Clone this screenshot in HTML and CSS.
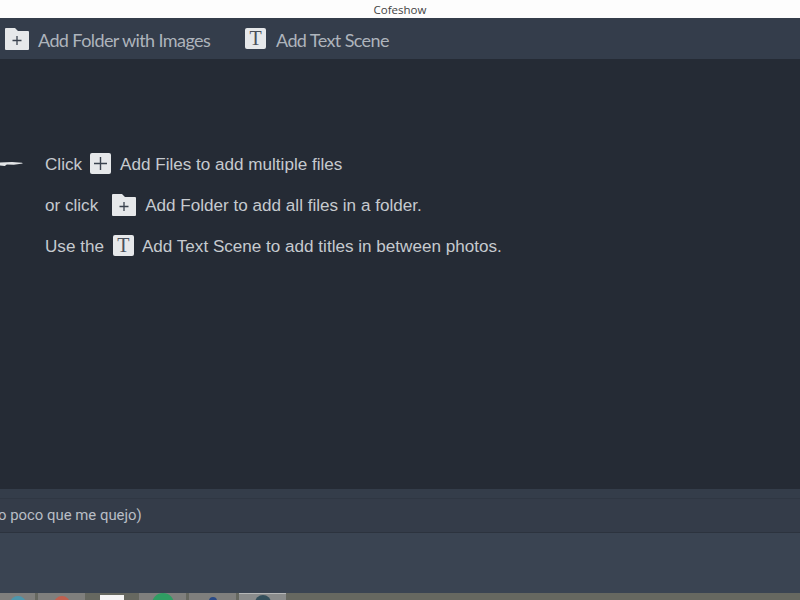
FILE: index.html
```html
<!DOCTYPE html>
<html>
<head lang="en">
    <meta charset="UTF-8">
    <title>Cofeshow</title>
    <link rel="stylesheet" href="styles.css">
</head>
<body>
<div class="title-bar">Cofeshow</div>
<div class="toolbar">
    <div class="tool tool-folder">
        <svg class="icon-folder" width="24" height="22" viewBox="0 0 24 22">
            <path d="M1 0h9l3 3h10a1 1 0 0 1 1 1v17a1 1 0 0 1-1 1H1a1 1 0 0 1-1-1V1a1 1 0 0 1 1-1z" fill="#e6e8ea"/>
            <path d="M12 8v9M7.500 12.500h9" stroke="#3a424e" stroke-width="1.300"/>
        </svg>
        <span class="label">Add Folder with Images</span>
    </div>
    <div class="tool tool-text">
        <span class="key key-t">T</span>
        <span class="label">Add Text Scene</span>
    </div>
</div>
<div class="main">
    <svg class="stroke" width="23" height="6" viewBox="0 0 23 6">
        <path d="M0 1.500L12 1l10 .8.800 .8-9 1.200-7-.2-2 1.400L0 4.600z" fill="#e4e6e8"/>
    </svg>
    <div class="row row-one">
        <span class="label">Click</span>
        <span class="key">
            <svg width="21" height="21" viewBox="0 0 21 21"><path d="M10.500 4v13M4 10.500h13" stroke="#3a424e" stroke-width="1.400"/></svg>
        </span>
        <span class="label">Add Files to add multiple files</span>
    </div>
    <div class="row row-two">
        <span class="label">or click</span>
        <svg class="icon-folder" width="24" height="22" viewBox="0 0 24 22">
            <path d="M1 0h9l3 3h10a1 1 0 0 1 1 1v17a1 1 0 0 1-1 1H1a1 1 0 0 1-1-1V1a1 1 0 0 1 1-1z" fill="#e6e8ea"/>
            <path d="M12 8v9M7.500 12.500h9" stroke="#3a424e" stroke-width="1.300"/>
        </svg>
        <span class="label">Add Folder to add all files in a folder.</span>
    </div>
    <div class="row row-three">
        <span class="label">Use the</span>
        <span class="key key-t">T</span>
        <span class="label">Add Text Scene to add titles in between photos.</span>
    </div>
</div>
<div class="divider"></div>
<div class="caption"><span>o poco que me quejo)</span></div>
<div class="bottom"></div>
<div class="taskbar">
    <div class="task task-a"><i class="dot dot-blue"></i></div>
    <div class="task task-b"><i class="dot dot-red"></i></div>
    <div class="task-plain"><i class="paper"></i></div>
    <div class="task task-c"><i class="dot dot-green"></i></div>
    <div class="task task-d"><i class="dot dot-navy"></i></div>
    <div class="task task-e"><i class="dot dot-dark"></i></div>
</div>
</body>
</html>
```

FILE: styles.css
```css
* {
    margin: 0;
    padding: 0;
    box-sizing: border-box;
}

html, body {
    width: 800px;
    height: 600px;
    overflow: hidden;
}

body {
    display: flex;
    flex-direction: column;
    background: #252b35;
    font-family: "Liberation Sans", sans-serif;
}

.title-bar {
    height: 18px;
    background: #fdfdfd;
    color: #444;
    font-family: "Open Sans", sans-serif;
    font-size: 11.500px;
    line-height: 19px;
    text-align: center;
}

.toolbar {
    height: 41px;
    display: flex;
    align-items: center;
    padding-left: 5px;
    background: #343d4b;
    color: #aeb4bc;
    font-family: Lato, sans-serif;
    font-size: 18px;
    letter-spacing: -0.6px;
}

.toolbar .label {
    padding-top: 3px;
}

.tool {
    display: flex;
    align-items: center;
}

.tool-folder {
    gap: 9px;
    width: 240px;
}

.tool-text {
    gap: 10px;
}

.key {
    width: 21px;
    height: 21px;
    display: block;
    background: #e6e8ea;
    border-radius: 2px;
    color: #4a505a;
    font-family: "Liberation Serif", serif;
    font-size: 20px;
    letter-spacing: 0;
    line-height: 21px;
    text-align: center;
}

.key svg,
.icon-folder {
    display: block;
}

.main {
    position: relative;
    height: 430px;
    padding: 94px 0 0 45px;
    color: #c6cacf;
    font-size: 17.100px;
}

.stroke {
    position: absolute;
    left: 0;
    top: 102px;
}

.row {
    height: 21px;
    display: flex;
    align-items: center;
    gap: 8px;
    margin-bottom: 20px;
}

.row .label {
    padding-top: 2px;
}

.row-one .key {
    margin-right: 1px;
}

.row-two .icon-folder {
    margin-left: 6px;
    margin-right: 1px;
}

.row-three .key {
    margin-left: 1px;
}

.divider {
    height: 9px;
    background: #343d4a;
}

.caption {
    height: 35px;
    background: #343c49;
    border-top: 1px solid #2f3743;
    border-bottom: 1px solid #2c333e;
    color: #b9bec5;
    font-family: Roboto, sans-serif;
    font-size: 14.900px;
    line-height: 32px;
    white-space: nowrap;
    overflow: hidden;
}

.caption span {
    display: block;
    margin-left: -2px;
}

.bottom {
    height: 60px;
    background: #3a4452;
}

.taskbar {
    height: 7px;
    display: flex;
    background: #666860;
    overflow: hidden;
}

.task {
    height: 7px;
    background: #7f7f7d;
    display: flex;
    justify-content: center;
}

.task-a { width: 35px; }
.task-b { width: 47px; margin-left: 3px; }
.task-c { width: 47px; }
.task-d { width: 47px; margin-left: 3px; }
.task-e { width: 47px; margin-left: 3px; background: #8a8c8c; border-top: 1px solid #b5b7b7; }

.task-plain {
    width: 54px;
    display: flex;
    justify-content: center;
}

.dot {
    display: block;
    width: 16px;
    height: 16px;
    margin-top: 3px;
    border-radius: 50%;
}

.dot-blue { background: #4d97ad; }
.dot-red { background: #c0604f; }
.dot-green { background: #2f9e63; margin-top: 0; width: 22px; height: 22px; }
.dot-navy { background: #2a4a86; width: 8px; height: 8px; margin-top: 4px; }
.dot-dark { background: #34505c; margin-top: 1px; }

.paper {
    display: block;
    width: 24px;
    height: 7px;
    margin-top: 2px;
    background: #f4f4f4;
}
```
